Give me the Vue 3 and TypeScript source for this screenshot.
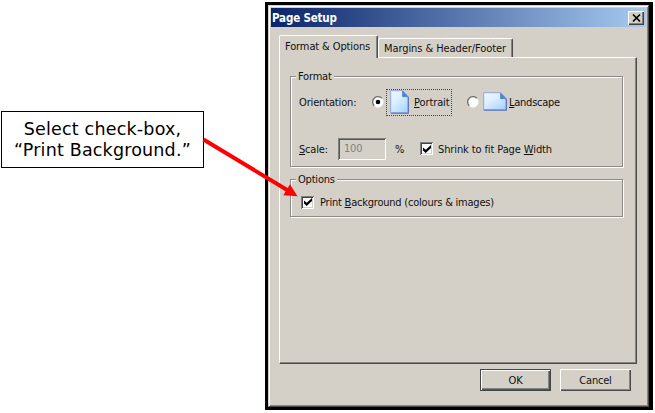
<script setup lang="ts">
import { ref } from 'vue'

type Orientation = 'portrait' | 'landscape'

const activeTab = ref(0)
const orientation = ref<Orientation>('portrait')
const shrink = ref(true)
const printBackground = ref(true)
</script>

<template>
  <main class="scene">
    <aside class="callout">
      <span class="line-a">Select check-box,</span>
      <span class="line-b">“Print Background.”</span>
    </aside>

    <div class="frame">
      <section class="dialog" role="dialog" aria-label="Page Setup">
        <header class="titlebar">
          <span class="title">Page Setup</span>
          <button class="close" aria-label="Close">
            <svg width="9" height="8" viewBox="0 0 9 8"><path d="M1 .5 8 7.5M8 .5 1 7.5" stroke="#000" stroke-width="1.6" /></svg>
          </button>
        </header>

        <nav class="tabs">
          <button class="tab t-format" :class="{ active: activeTab === 0 }" @click="activeTab = 0"><span>Format &amp; Options</span></button>
          <button class="tab t-margins" :class="{ active: activeTab === 1 }" @click="activeTab = 1"><span>Margins &amp; Header/Footer</span></button>
        </nav>

        <div class="panel">
          <div class="group format">
            <span class="legend l-format">Format</span>
            <div class="row orient">
              <span class="label t-orient">Orientation:</span>
              <span class="radio" @click="orientation = 'portrait'">
                <svg width="12" height="12" viewBox="0 0 12 12">
                  <circle cx="6" cy="6" r="5.2" fill="#fff" stroke="#f4f2ee" />
                  <path d="M2.2 9.8A5.2 5.2 0 0 1 9.8 2.2" fill="none" stroke="#77746e" stroke-width="1.4" />
                  <circle v-if="orientation === 'portrait'" cx="6" cy="6" r="2.3" />
                </svg>
              </span>
              <span class="choice portrait">
                <svg width="19" height="24" viewBox="0 0 19 24">
                  <defs>
                    <linearGradient id="pg" x1="0" y1="0" x2=".8" y2="1"><stop offset="0" stop-color="#f0f9ff" /><stop offset=".45" stop-color="#dcefff" /><stop offset="1" stop-color="#a8d4ff" /></linearGradient>
                  </defs>
                  <path d="M.7.7H12.5L18 6.5V23H.7Z" fill="url(#pg)" stroke="#8fa6dc" />
                  <path d="M1 23.2H18.4V7" fill="none" stroke="#6478b8" stroke-width="1.2" />
                  <path d="M12.5 1V6.7H18Z" fill="#3b8be0" stroke="#4f7ac2" stroke-width=".7" />
                </svg>
                <span class="t-portrait"><u>P</u>ortrait</span>
              </span>
              <span class="radio second" @click="orientation = 'landscape'">
                <svg width="12" height="12" viewBox="0 0 12 12">
                  <circle cx="6" cy="6" r="5.2" fill="#fff" stroke="#f4f2ee" />
                  <path d="M2.2 9.8A5.2 5.2 0 0 1 9.8 2.2" fill="none" stroke="#77746e" stroke-width="1.4" />
                  <circle v-if="orientation === 'landscape'" cx="6" cy="6" r="2.3" />
                </svg>
              </span>
              <span class="choice landscape">
                <svg width="24" height="19" viewBox="0 0 24 19">
                  <path d="M.7.7H17.5L23 6.5V18H.7Z" fill="url(#pg)" stroke="#8fa6dc" />
                  <path d="M1 18.2H23.4V7" fill="none" stroke="#6478b8" stroke-width="1.2" />
                  <path d="M17.5 1V6.7H23Z" fill="#3b8be0" stroke="#4f7ac2" stroke-width=".7" />
                </svg>
                <span class="t-landscape"><u>L</u>andscape</span>
              </span>
            </div>
            <div class="row scale">
              <span class="label t-scale"><u>S</u>cale:</span>
              <span class="field">100</span>
              <span class="percent">%</span>
              <span class="check" @click="shrink = !shrink">
                <svg v-if="shrink" width="8" height="8" viewBox="0 0 8 8"><path d="M0 2.5 2.7 4.8 8 0V3L2.7 8 0 5.5Z" /></svg>
              </span>
              <span class="t-shrink">Shrink to fit Page <u>W</u>idth</span>
            </div>
          </div>

          <div class="group options">
            <span class="legend l-options">Options</span>
            <div class="row background">
              <span class="check" @click="printBackground = !printBackground">
                <svg v-if="printBackground" width="8" height="8" viewBox="0 0 8 8"><path d="M0 2.5 2.7 4.8 8 0V3L2.7 8 0 5.5Z" /></svg>
              </span>
              <span class="t-print">Print <u>B</u>ackground (colours &amp; images)</span>
            </div>
          </div>
        </div>

        <footer class="actions">
          <button class="btn ok"><span>OK</span></button>
          <button class="btn cancel"><span>Cancel</span></button>
        </footer>
      </section>
    </div>

    <svg class="arrow" width="655" height="413" viewBox="0 0 655 413">
      <path d="M203.5 139.5 288 190.5" stroke="#f00" stroke-width="4" />
      <path d="M297.5 196.3 283.3 195.2 290 184.3Z" fill="#f00" />
    </svg>
  </main>
</template>

<style>
body { background: #fff; }
</style>

<style scoped>
* { box-sizing: border-box; }
.scene {
  position: relative;
  display: flex;
  align-items: flex-start;
  width: 655px;
  height: 413px;
  overflow: hidden;
  background: #fff;
  color: #111;
  font: 11px/14px "DejaVu Sans Condensed", "DejaVu Sans", sans-serif;
  font-stretch: condensed;
  letter-spacing: -0.2px;
  white-space: nowrap;
}
button { font: inherit; letter-spacing: inherit; color: inherit; padding: 0; margin: 0; background: #d4d0c8; border: 0; }
u { text-decoration-thickness: 1px; text-underline-offset: 1px; }
.callout {
  display: flex;
  flex-direction: column;
  align-items: center;
  width: 203px;
  height: 57px;
  margin: 111px 62px 0 1px;
  padding-top: 7px;
  border: 1px solid #000;
  font: 17.5px/21px "DejaVu Sans", sans-serif;
  font-stretch: normal;
  color: #000;
  flex: none;
}
.line-a { letter-spacing: 0.2px; }
.line-b { letter-spacing: 0.18px; }
.frame { flex: none; width: 388px; height: 408px; margin: 2px 0 0 -1px; padding: 3px; background: #000; }
.dialog {
  width: 381px;
  height: 402px;
  padding: 1px;
  background: #d4d0c8;
  border: 1px solid;
  border-color: #d4d0c8 #4b4b49 #4b4b49 #d4d0c8;
  box-shadow: inset 1px 1px #fff, inset -1px -1px #858580;
}
.titlebar {
  display: flex;
  align-items: center;
  justify-content: space-between;
  height: 19px;
  margin: 1px 1px 0;
  padding: 0 2px 0 1px;
  background: linear-gradient(90deg, #0a246a, #a6caf0);
}
.title { color: #fff; font-weight: bold; font-size: 11.5px; letter-spacing: -0.17px; }
.close {
  display: flex;
  align-items: center;
  justify-content: center;
  width: 16px;
  height: 14px;
  box-shadow: inset 1px 1px #fff, inset -1px -1px #404040, inset -2px -2px #808080;
}
.tabs { display: flex; align-items: flex-end; height: 30px; margin-left: 9px; }
.tab {
  height: 19px;
  border-top: 1px solid #fff;
  border-left: 1px solid #fff;
  border-right: 1px solid #4b4b49;
  border-radius: 2px 2px 0 0;
  box-shadow: inset -1px 0 #858580;
  text-align: left;
  padding-left: 5px;
}
.tab.active { position: relative; height: 23px; margin-bottom: -1px; padding-bottom: 1px; }
.t-format { width: 99px; letter-spacing: -0.12px; }
.t-margins { width: 135px; letter-spacing: -0.08px; padding-top: 1px; }
.panel {
  width: 358px;
  height: 307px;
  margin-left: 9px;
  padding: 18px 0 0 10px;
  border: 1px solid;
  border-color: #fff #4b4b49 #4b4b49 #fff;
  box-shadow: inset -1px -1px #858580;
}
.group { position: relative; width: 333px; border: 1px solid #8b8a86; box-shadow: inset 1px 1px #fff, 1px 1px #fff; }
.format { height: 91px; padding-top: 10px; }
.options { height: 38px; margin-top: 12px; padding-top: 13px; }
.legend { position: absolute; top: -7px; left: 5px; padding: 0 2px; line-height: 14px; background: #d4d0c8; }
.row { display: flex; align-items: center; }
.orient { height: 29px; padding-left: 8px; }
.label { flex: none; }
.t-orient { width: 73px; padding-top: 2px; letter-spacing: -0.15px; }
.radio { width: 12px; height: 12px; display: flex; }
.choice { display: flex; align-items: center; }
.portrait { width: 66px; height: 27px; margin: 2px 0 0 2px; padding: 0 0 2px 3px; border: 1px dotted #444; gap: 5px; }
.t-portrait { padding-top: 2px; letter-spacing: -0.1px; }
.second { margin-left: 15px; }
.landscape { margin-left: 4px; gap: 2px; }
.t-landscape { padding-top: 2px; letter-spacing: -0.25px; }
.landscape svg { flex: none; }
.portrait svg { flex: none; }
.scale { height: 23px; margin-top: 21px; padding-left: 8px; }
.t-scale { width: 39px; padding-top: 2px; }
.field {
  width: 48px;
  height: 22px;
  padding: 4px 0 0 6px;
  color: #808080;
  box-shadow: inset 1px 1px #808080, inset -1px -1px #fff, inset 2px 2px #555;
  letter-spacing: -0.2px;
}
.percent { width: 25px; margin-left: 9px; padding-top: 2px; }
.check {
  display: flex;
  align-items: center;
  justify-content: center;
  width: 13px;
  height: 13px;
  padding: 0;
  background: #fff;
  box-shadow: inset 1px 1px #808080, inset -1px -1px #fff, inset 2px 2px #404040, inset -2px -2px #d4d0c8;
}
.t-shrink { margin-left: 5px; padding-top: 2px; letter-spacing: -0.11px; }
.background { padding-left: 10px; height: 18px; }
.t-print { margin-left: 6px; padding-top: 1px; letter-spacing: -0.22px; }
.actions { display: flex; justify-content: flex-end; gap: 9px; margin: 5px 16px 0 0; }
.btn { width: 71px; height: 22px; padding-top: 1px; box-shadow: inset 1px 1px #fff, inset -1px -1px #4b4b49, inset -2px -2px #858580; }
.ok { border: 1px solid #444; box-shadow: inset 1px 1px #fff, inset -1px -1px #555, inset -2px -2px #858580; }
.arrow { position: absolute; left: 0; top: 0; pointer-events: none; }
</style>
